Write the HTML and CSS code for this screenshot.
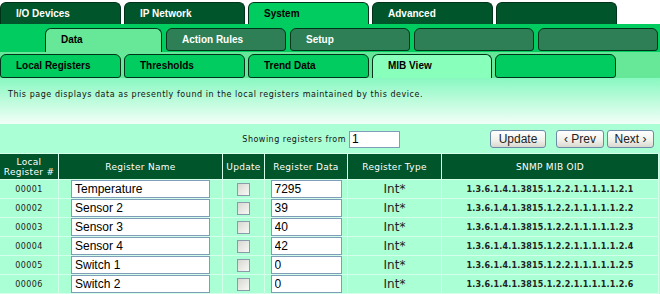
FILE: index.html
```html
<!DOCTYPE html>
<html lang="en">
<head>
    <meta charset="UTF-8">
    <title>MIB View</title>
    <link rel="stylesheet" href="styles.css">
</head>
<body>

    <div class="tabrow row1">
        <div class="tab dark">I/O Devices</div>
        <div class="tab dark">IP Network</div>
        <div class="tab bright active">System</div>
        <div class="tab dark">Advanced</div>
        <div class="tab dark"></div>
    </div>

    <div class="tabrow row2">
        <div class="tab light active">Data</div>
        <div class="tab mid">Action Rules</div>
        <div class="tab mid">Setup</div>
        <div class="tab mid"></div>
        <div class="tab mid"></div>
    </div>

    <div class="tabrow row3">
        <div class="tab bright">Local Registers</div>
        <div class="tab bright">Thresholds</div>
        <div class="tab bright">Trend Data</div>
        <div class="tab mint active">MIB View</div>
        <div class="tab bright"></div>
    </div>

    <div class="intro">
        This page displays data as presently found in the local registers maintained by this device.
    </div>

    <div class="main">
        <div class="controls">
            <div class="start-at">
                <span>Showing registers from</span>
                <input type="text" class="start-input" value="1">
            </div>
            <div class="nav-buttons">
                <button class="btn btn-update">Update</button>
                <button class="btn btn-prev">&lsaquo; Prev</button>
                <button class="btn btn-next">Next &rsaquo;</button>
            </div>
        </div>

        <table class="registers">
            <thead>
                <tr>
                    <th class="col-num">Local<br>Register #</th>
                    <th class="col-name">Register Name</th>
                    <th class="col-upd">Update</th>
                    <th class="col-data">Register Data</th>
                    <th class="col-type">Register Type</th>
                    <th class="col-oid">SNMP MIB OID</th>
                </tr>
            </thead>
            <tbody id="rows"></tbody>
        </table>
    </div>

    <script>
        const registers = [
            { num: '00001', name: 'Temperature', data: '7295' },
            { num: '00002', name: 'Sensor 2', data: '39' },
            { num: '00003', name: 'Sensor 3', data: '40' },
            { num: '00004', name: 'Sensor 4', data: '42' },
            { num: '00005', name: 'Switch 1', data: '0' },
            { num: '00006', name: 'Switch 2', data: '0' }
        ];
        const tbody = document.getElementById('rows');
        registers.forEach((reg, i) => {
            const tr = document.createElement('tr');
            tr.innerHTML = `
                <td class="num">${reg.num}</td>
                <td><input type="text" class="name-input" value="${reg.name}"></td>
                <td><input type="checkbox" class="upd-box"></td>
                <td><input type="text" class="data-input" value="${reg.data}"></td>
                <td class="type">Int*</td>
                <td class="oid">1.3.6.1.4.1.3815.1.2.2.1.1.1.1.1.2.${i + 1}</td>`;
            tbody.appendChild(tr);
        });
        // next row only peeks in at the bottom edge of the window
        const more = document.createElement('tr');
        more.innerHTML = `
            <td></td>
            <td><input type="text" class="name-input"></td>
            <td></td>
            <td><input type="text" class="data-input"></td>
            <td></td>
            <td></td>`;
        tbody.appendChild(more);
    </script>

</body>
</html>
```

FILE: styles.css
```css
body {
    margin: 0;
    background-color: #ffffff;
    font-family: 'DejaVu Sans', Verdana, sans-serif;
    color: #111;
    overflow: hidden;
}
/* --- tab rows --- */
.tabrow {
    display: flex;
    box-sizing: border-box;
}
.tab {
    box-sizing: border-box;
    width: 121px;
    flex: none;
    border: 1px solid #00331a;
    border-radius: 6px 6px 3px 3px;
    padding-left: 15px;
    font-family: 'Liberation Sans', Arial, sans-serif;
    font-weight: bold;
    font-size: 10px;
}
.tab.active {
    border-bottom: none;
    border-radius: 6px 6px 0 0;
}
.dark {
    background-color: #00552a;
    color: #ffffff;
}
.bright {
    background-color: #00cc60;
    color: #000;
}
.mid {
    background-color: #2e7f55;
    color: #ffffff;
}
.light {
    background-color: #66e898;
    color: #000;
}
.mint {
    background-color: #88ffbb;
    color: #000;
}
.row1 {
    height: 24px;
    padding-top: 2px;
    gap: 3px;
    align-items: stretch;
}
.row1 .tab {
    border-bottom: none;
    border-radius: 6px 6px 0 0;
    line-height: 21px;
}
.row2 {
    height: 28px;
    padding: 4px 0 0 45px;
    gap: 4px;
    background-color: #00cc60;
    align-items: flex-start;
}
.row2 .tab {
    width: 120px;
    height: 23px;
    line-height: 21px;
}
.row2 .tab.active {
    width: 117px;
    height: 24px;
    line-height: 22px;
}
.row3 {
    height: 26px;
    padding-top: 2px;
    gap: 3px;
    background-color: #66e898;
    align-items: flex-start;
}
.row3 .tab {
    height: 24px;
    line-height: 22px;
}
.row3 .tab.active {
    width: 120px;
}
/* --- content --- */
.intro {
    height: 46px;
    box-sizing: border-box;
    padding: 12px 8px 0;
    font-size: 8px;
    letter-spacing: 0.55px;
    background: linear-gradient(#88f8c0, #f2fff8);
}
.main {
    background-color: #aaffd5;
    padding-top: 6px;
    height: 200px;
}
.controls {
    display: flex;
    align-items: center;
    height: 18px;
}
.start-at {
    width: 400px;
    display: flex;
    justify-content: flex-end;
    align-items: center;
    gap: 3px;
    font-size: 8px;
    letter-spacing: 0.5px;
}
.start-input {
    width: 51px;
    height: 17px;
    box-sizing: border-box;
    border: 1px solid #7f9db9;
    padding: 0 2px;
    font-family: 'Liberation Sans', Arial, sans-serif;
    font-size: 12px;
}
.nav-buttons {
    display: flex;
    margin-left: 90px;
}
.btn {
    height: 18px;
    box-sizing: border-box;
    border: 1px solid #6d8aa8;
    border-radius: 3px;
    background: linear-gradient(#ffffff, #f0f0ea 60%, #d8d8d0);
    font-family: 'Liberation Sans', Arial, sans-serif;
    font-size: 12px;
    color: #222;
    padding: 0;
}
.btn-update {
    width: 56px;
}
.btn-prev {
    width: 48px;
    margin-left: 10px;
}
.btn-next {
    width: 47px;
    margin-left: 3px;
}
/* --- register table --- */
.registers {
    width: 660px;
    margin-top: 5px;
    border-collapse: separate;
    border-spacing: 1px;
    background-color: #d4ffea;
    table-layout: fixed;
    margin-left: -1px;
}
.registers th {
    background-color: #00552a;
    color: #ffffff;
    font-weight: normal;
    font-size: 9px;
    line-height: 10px;
    height: 25px;
    padding: 0;
    letter-spacing: 0.3px;
}
.col-num { width: 58px; }
.col-name { width: 163px; }
.col-upd { width: 41px; }
.col-data { width: 82px; }
.col-type { width: 93px; }
.col-oid { width: 216px; }
.registers td {
    background-color: #aaffd5;
    height: 18px;
    padding: 0;
    text-align: center;
    vertical-align: middle;
}
td.num {
    font-size: 8px;
    letter-spacing: 0.4px;
    color: #222;
}
td.type {
    font-size: 12px;
    color: #222;
}
td.oid {
    font-size: 8px;
    font-weight: bold;
    letter-spacing: 0.2px;
    color: #222;
}
.name-input,
.data-input {
    display: block;
    height: 18px;
    box-sizing: border-box;
    border: 1px solid #7f9db9;
    background-color: #ffffff;
    font-family: 'Liberation Sans', Arial, sans-serif;
    font-size: 12px;
    padding: 0 3px;
    margin: 0 auto;
}
.name-input {
    width: 139px;
}
.data-input {
    width: 71px;
}
.upd-box {
    appearance: none;
    display: block;
    width: 13px;
    height: 13px;
    margin: 0 auto;
    border: 1px solid #8c9bab;
    background: linear-gradient(135deg, #d8d8d2, #f8f8f6);
}
```
